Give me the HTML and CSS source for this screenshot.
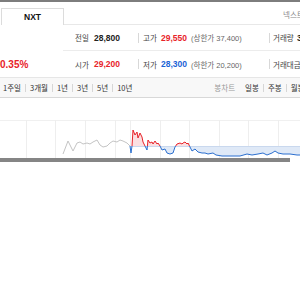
FILE: index.html
```html
<!DOCTYPE html>
<html lang="ko">
<head>
<meta charset="utf-8">
<link rel="stylesheet" href="styles.css">
</head>
<body>
<div class="page">
  <div class="topline"></div>
  <div class="market">
    <div class="tab-nxt">NXT</div>
    <div class="tab-fill"></div>
    <div class="tab-note">넥스트레이드 기준</div>
  </div>
  <div class="info">
    <div class="rate-cell"></div>
    <div class="row first">
      <span class="lbl w19">전일</span><span class="num w44">28,800</span>
      <span class="sep"></span>
      <span class="lbl w18">고가</span><span class="num up w28">29,550</span><span class="sub w80">(상한가 37,400)</span>
      <span class="sep s3"></span>
      <span class="lbl w24">거래량</span><span class="num">3,420,115</span>
    </div>
    <div class="rate-cell"><span class="rate">0.35%</span></div>
    <div class="row">
      <span class="lbl w19">시가</span><span class="num up w44">29,200</span>
      <span class="sep"></span>
      <span class="lbl w18">저가</span><span class="num down w28">28,300</span><span class="sub w80">(하한가 20,200)</span>
      <span class="sep s3"></span>
      <span class="lbl wide">거래대금</span><span class="num">99,450백만</span>
    </div>
  </div>
  <div class="periods">
    <div class="plist">
      <span class="p">1주일</span><span class="psep"></span>
      <span class="p">3개월</span><span class="psep"></span>
      <span class="p">1년</span><span class="psep"></span>
      <span class="p">3년</span><span class="psep"></span>
      <span class="p">5년</span><span class="psep"></span>
      <span class="p">10년</span>
    </div>
    <div class="divider"></div>
    <div class="klist">
      <span class="k muted">봉차트</span>
      <span class="k">일봉</span><span class="psep"></span>
      <span class="k">주봉</span><span class="psep"></span>
      <span class="k">월봉</span>
    </div>
  </div>
  <div class="chart">
    <svg width="300" height="38" viewBox="0 0 300 38">
      <defs>
        <clipPath id="above"><rect x="0" y="0" width="300" height="26"/></clipPath>
        <clipPath id="below"><rect x="0" y="26" width="300" height="12"/></clipPath>
      </defs>
      <line x1="0" y1="0.5" x2="300" y2="0.5" stroke="#f0f0f0"/>
      <g stroke="#eeeeee" stroke-width="1">
        <line x1="26.5" y1="0" x2="26.5" y2="38"/>
        <line x1="55.5" y1="0" x2="55.5" y2="38"/>
        <line x1="85.5" y1="0" x2="85.5" y2="38"/>
        <line x1="115.5" y1="0" x2="115.5" y2="38"/>
        <line x1="130.5" y1="0" x2="130.5" y2="38"/>
        <line x1="160.5" y1="0" x2="160.5" y2="38"/>
        <line x1="189.5" y1="0" x2="189.5" y2="38"/>
        <line x1="219.5" y1="0" x2="219.5" y2="38"/>
        <line x1="248.5" y1="0" x2="248.5" y2="38"/>
        <line x1="278.5" y1="0" x2="278.5" y2="38"/>
      </g>
      <polyline fill="none" stroke="#c4c4c4" stroke-width="1"
        points="63,34 68,21 70,25 73,31 77,23 80,22 83,24 87,23 90,24 93,22 97,20 100,25 103,27 107,26 110,23 113,21 117,22 120,20 123,21 127,23 130,26"/>
      <polygon clip-path="url(#above)" fill="#fbdfe1"
        points="130,26 131,33 132,26 133,10 135,15 137,12 138,18 140,13 142,17 143,22 145,26 147,30 148,20 150,23 152,22 153,24 155,21 157,24 158,23 160,26 162,30 165,29 167,33 170,34 173,33 175,27 177,24 180,23 182,24 183,23 185,22 187,24 188,23 190,27 192,31 195,29 198,32 202,33 205,33 208,34 213,33 216,35 222,36 230,36 240,36 247,34 252,35 258,34 263,33 267,35 272,33 275,31 278,33 283,34 290,34 297,35 300,35 300,26"/>
      <polygon clip-path="url(#below)" fill="#dfe9f7"
        points="130,26 131,33 132,26 133,10 135,15 137,12 138,18 140,13 142,17 143,22 145,26 147,30 148,20 150,23 152,22 153,24 155,21 157,24 158,23 160,26 162,30 165,29 167,33 170,34 173,33 175,27 177,24 180,23 182,24 183,23 185,22 187,24 188,23 190,27 192,31 195,29 198,32 202,33 205,33 208,34 213,33 216,35 222,36 230,36 240,36 247,34 252,35 258,34 263,33 267,35 272,33 275,31 278,33 283,34 290,34 297,35 300,35 300,26"/>
      <line x1="130" y1="26.5" x2="300" y2="26.5" stroke="#c9d8ee" stroke-width="1"/>
      <polyline clip-path="url(#above)" fill="none" stroke="#e8232a" stroke-width="1"
        points="130,26 131,33 132,26 133,10 135,15 137,12 138,18 140,13 142,17 143,22 145,26 147,30 148,20 150,23 152,22 153,24 155,21 157,24 158,23 160,26 162,30 165,29 167,33 170,34 173,33 175,27 177,24 180,23 182,24 183,23 185,22 187,24 188,23 190,27 192,31 195,29 198,32 202,33 205,33 208,34 213,33 216,35 222,36 230,36 240,36 247,34 252,35 258,34 263,33 267,35 272,33 275,31 278,33 283,34 290,34 297,35 300,35"/>
      <polyline clip-path="url(#below)" fill="none" stroke="#2b6fcf" stroke-width="1"
        points="130,26 131,33 132,26 133,10 135,15 137,12 138,18 140,13 142,17 143,22 145,26 147,30 148,20 150,23 152,22 153,24 155,21 157,24 158,23 160,26 162,30 165,29 167,33 170,34 173,33 175,27 177,24 180,23 182,24 183,23 185,22 187,24 188,23 190,27 192,31 195,29 198,32 202,33 205,33 208,34 213,33 216,35 222,36 230,36 240,36 247,34 252,35 258,34 263,33 267,35 272,33 275,31 278,33 283,34 290,34 297,35 300,35"/>
    </svg>
  </div>
  <div class="scrollbar"></div>
</div>
</body>
</html>
```

FILE: styles.css
```css
html, body {
  margin: 0;
  padding: 0;
  background: #ffffff;
}
.page {
  width: 300px;
  height: 300px;
  overflow: hidden;
  font-family: "Liberation Sans", "Noto Sans CJK KR", sans-serif;
  color: #333;
}
.topline {
  height: 2px;
  background: #7d7d7d;
}
.market {
  display: grid;
  grid-template-columns: 64px 219px 1fr;
  height: 23px;
  align-items: end;
}
.tab-nxt {
  margin-left: 1px;
  height: 17px;
  box-sizing: border-box;
  border: 1px solid #dcdcdc;
  border-bottom: none;
  display: flex;
  align-items: center;
  justify-content: center;
  font-size: 8.5px;
  font-weight: bold;
  color: #111;
}
.tab-fill {
  height: 100%;
  box-sizing: border-box;
  border-bottom: 1px solid #e8e8e8;
}
.tab-note {
  height: 100%;
  box-sizing: border-box;
  border-bottom: 1px solid #e8e8e8;
  padding-top: 7px;
  font-size: 7.5px;
  color: #888;
  white-space: nowrap;
  overflow: hidden;
}
.info {
  display: grid;
  grid-template-columns: 63px 237px;
  grid-template-rows: 26px 26px;
}
.row {
  display: flex;
  align-items: center;
  padding-left: 12px;
  white-space: nowrap;
  overflow: hidden;
}
.row.first {
  border-bottom: 1px solid #ececec;
}
.rate-cell {
  display: flex;
  align-items: center;
  overflow: hidden;
}
.rate {
  font-size: 10px;
  font-weight: bold;
  color: #e8232a;
}
.lbl {
  font-family: "Noto Sans CJK KR", sans-serif;
  font-size: 7.5px;
  color: #444;
  flex: none;
}
.num {
  font-size: 8.5px;
  font-weight: bold;
  color: #222;
  flex: none;
}
.num.up { color: #e8232a; }
.num.down { color: #1a63d6; }
.sub {
  font-size: 7.5px;
  color: #666;
  flex: none;
  padding-left: 2px;
  box-sizing: border-box;
}
.w19 { width: 19px; }
.w44 { width: 44px; }
.w18 { width: 18px; }
.w28 { width: 28px; }
.w80 { width: 80px; }
.w24 { width: 24px; }
.wide { margin-right: 4px; }
.sep {
  width: 1px;
  height: 10px;
  background: #d8d8d8;
  margin-right: 4px;
  flex: none;
}
.sep.s3 { margin-right: 3px; }
.periods {
  height: 21px;
  box-sizing: border-box;
  border-top: 1px solid #e6e6e6;
  border-bottom: 1px solid #d8d8d8;
  background: #f8f8f8;
  display: flex;
  align-items: center;
  white-space: nowrap;
  overflow: hidden;
  font-family: "Noto Sans CJK KR", sans-serif;
  font-size: 7.5px;
  color: #333;
}
.plist {
  display: flex;
  align-items: center;
  padding-left: 3px;
  gap: 4px;
}
.psep {
  width: 1px;
  height: 8px;
  background: #d6d6d6;
}
.divider {
  width: 1px;
  align-self: stretch;
  background: #e4e4e4;
  margin-left: 18px;
}
.klist {
  display: flex;
  align-items: center;
  gap: 4px;
  margin-left: 64px;
}
.k.muted {
  color: #999;
  margin-right: 6px;
}
.chart {
  margin-top: 22px;
  height: 38px;
}
.chart svg {
  display: block;
}
.scrollbar {
  width: 290px;
  height: 4px;
  background: #858585;
}
```
